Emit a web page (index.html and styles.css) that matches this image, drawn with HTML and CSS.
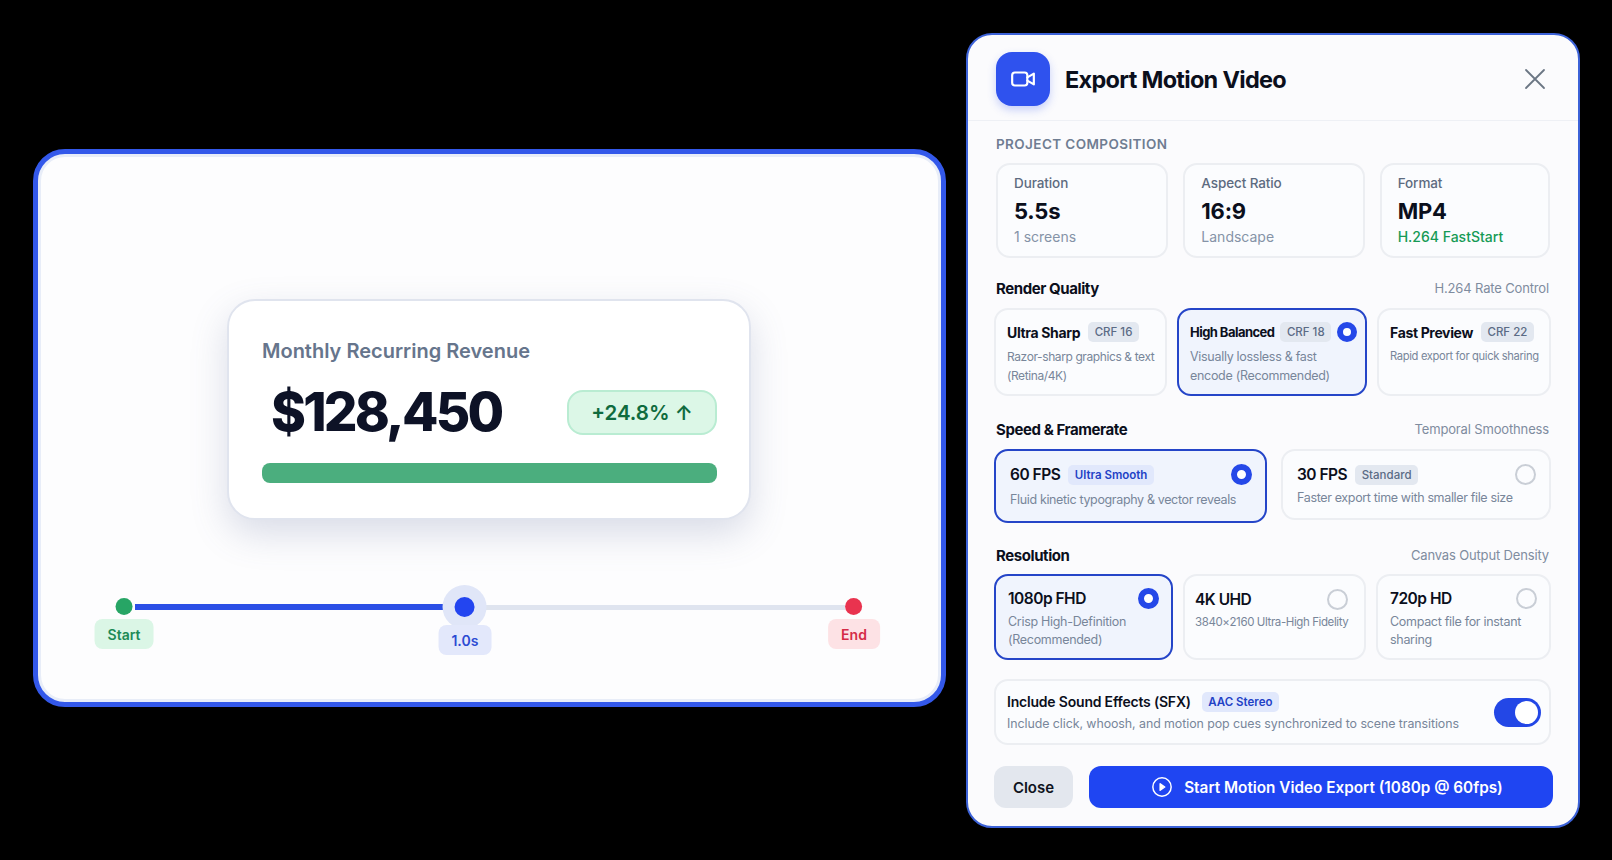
FILE: index.html
```html
<!DOCTYPE html>
<html lang="en">
<head>
    <meta charset="UTF-8">
    <title>Export Motion Video</title>
    <link rel="stylesheet" href="styles.css">
</head>
<body>
    <div class="stage">
        <section class="canvas">
            <div class="kpi-card">
                <div class="kpi-label">Monthly Recurring Revenue</div>
                <div class="kpi-row">
                    <span class="kpi-value">$128,450</span>
                    <span class="kpi-badge">+24.8% ↑</span>
                </div>
                <div class="kpi-bar"></div>
            </div>
            <div class="timeline">
                <div class="track"></div>
                <div class="track-fill"></div>
                <div class="stop" style="left: 0%">
                    <span class="stop-dot dot-green"></span>
                    <span class="stop-pill pill-green">Start</span>
                </div>
                <div class="stop stop-current" style="left: 46.7%">
                    <span class="stop-thumb"></span>
                    <span class="stop-pill pill-blue">1.0s</span>
                </div>
                <div class="stop" style="left: 100%">
                    <span class="stop-dot dot-red"></span>
                    <span class="stop-pill pill-red">End</span>
                </div>
            </div>
        </section>

        <section class="modal">
            <header class="modal-head">
                <div class="modal-icon">
                    <svg width="26" height="26" viewBox="0 0 24 24" fill="none" stroke="#fff" stroke-width="2" stroke-linecap="round" stroke-linejoin="round">
                        <rect x="2" y="6" width="14" height="12" rx="2.5"/>
                        <path d="M16 10.5l6-3.5v10l-6-3.5"/>
                    </svg>
                </div>
                <h1 class="modal-title">Export Motion Video</h1>
                <svg class="modal-close" width="24" height="24" viewBox="0 0 24 24" fill="none" stroke="#6b7684" stroke-width="1.8" stroke-linecap="round">
                    <path d="M3 3l18 18M21 3L3 21"/>
                </svg>
            </header>

            <div class="modal-body">
                <div class="eyebrow">PROJECT COMPOSITION</div>
                <div class="stats">
                    <div class="stat">
                        <div class="stat-label">Duration</div>
                        <div class="stat-value">5.5s</div>
                        <div class="stat-sub">1 screens</div>
                    </div>
                    <div class="stat">
                        <div class="stat-label">Aspect Ratio</div>
                        <div class="stat-value">16:9</div>
                        <div class="stat-sub">Landscape</div>
                    </div>
                    <div class="stat">
                        <div class="stat-label">Format</div>
                        <div class="stat-value">MP4</div>
                        <div class="stat-sub stat-good">H.264 FastStart</div>
                    </div>
                </div>

                <div class="section-head">
                    <span class="section-title">Render Quality</span>
                    <span class="section-note">H.264 Rate Control</span>
                </div>
                <div class="options quality">
                    <div class="option">
                        <div class="option-top">
                            <span class="option-title">Ultra Sharp</span>
                            <span class="tag">CRF 16</span>
                        </div>
                        <p class="option-desc">Razor-sharp graphics &amp; text (Retina/4K)</p>
                    </div>
                    <div class="option selected">
                        <div class="option-top">
                            <span class="option-title">High Balanced</span>
                            <span class="tag">CRF 18</span>
                            <span class="radio on"></span>
                        </div>
                        <p class="option-desc">Visually lossless &amp; fast<br>encode (Recommended)</p>
                    </div>
                    <div class="option">
                        <div class="option-top">
                            <span class="option-title">Fast Preview</span>
                            <span class="tag">CRF 22</span>
                        </div>
                        <p class="option-desc desc-small">Rapid export for quick sharing</p>
                    </div>
                </div>

                <div class="section-head head-gap">
                    <span class="section-title">Speed &amp; Framerate</span>
                    <span class="section-note">Temporal Smoothness</span>
                </div>
                <div class="options speed">
                    <div class="option selected">
                        <div class="option-top">
                            <span class="option-title">60 FPS</span>
                            <span class="tag tag-blue">Ultra Smooth</span>
                            <span class="radio on"></span>
                        </div>
                        <p class="option-desc">Fluid kinetic typography &amp; vector reveals</p>
                    </div>
                    <div class="option">
                        <div class="option-top">
                            <span class="option-title">30 FPS</span>
                            <span class="tag">Standard</span>
                            <span class="radio"></span>
                        </div>
                        <p class="option-desc">Faster export time with smaller file size</p>
                    </div>
                </div>

                <div class="section-head head-tight">
                    <span class="section-title">Resolution</span>
                    <span class="section-note">Canvas Output Density</span>
                </div>
                <div class="options resolution">
                    <div class="option selected">
                        <div class="option-top">
                            <span class="option-title">1080p FHD</span>
                            <span class="radio on"></span>
                        </div>
                        <p class="option-desc">Crisp High-Definition (Recommended)</p>
                    </div>
                    <div class="option option-narrow">
                        <div class="option-top">
                            <span class="option-title">4K UHD</span>
                            <span class="radio"></span>
                        </div>
                        <p class="option-desc desc-small">3840×2160 Ultra-High Fidelity</p>
                    </div>
                    <div class="option">
                        <div class="option-top">
                            <span class="option-title">720p HD</span>
                            <span class="radio"></span>
                        </div>
                        <p class="option-desc">Compact file for instant sharing</p>
                    </div>
                </div>

                <div class="sfx">
                    <div class="sfx-text">
                        <div class="option-top">
                            <span class="sfx-title">Include Sound Effects (SFX)</span>
                            <span class="tag tag-blue">AAC Stereo</span>
                        </div>
                        <p class="sfx-desc">Include click, whoosh, and motion pop cues synchronized to scene transitions</p>
                    </div>
                    <div class="toggle"><span class="toggle-knob"></span></div>
                </div>

                <div class="actions">
                    <button class="btn btn-close">Close</button>
                    <button class="btn btn-primary">
                        <svg width="22" height="22" viewBox="0 0 24 24" fill="none" stroke="#fff" stroke-width="1.6" stroke-linejoin="round">
                            <circle cx="12" cy="12" r="10"/>
                            <path d="M10 8.5l5 3.5-5 3.5z" fill="#fff"/>
                        </svg>
                        Start Motion Video Export (1080p @ 60fps)
                    </button>
                </div>
            </div>
        </section>
    </div>
</body>
</html>
```

FILE: styles.css
```css
* { margin: 0; padding: 0; box-sizing: border-box; }
body {
    font-family: Inter, "Noto Sans", sans-serif;
    background: #000;
    color: #0d1220;
}
.stage {
    width: 1612px;
    height: 860px;
    display: flex;
    align-items: flex-start;
    padding: 33px 0 0 33px;
    gap: 20px;
    overflow: hidden;
}

/* left canvas */
.canvas {
    width: 913px;
    height: 558px;
    margin-top: 116px;
    background: #fdfdfe;
    border: 5px solid #3358ea;
    border-radius: 32px;
    box-shadow: inset 0 0 0 3px #e8edf8;
    padding: 145px 0 0 86px;
}
.kpi-card {
    width: 524px;
    height: 221px;
    margin-left: 103px;
    background: #fff;
    border: 2px solid #e0e4ee;
    border-radius: 28px;
    box-shadow: 0 14px 36px rgba(90, 105, 150, 0.22);
    padding: 30px 32px 0 33px;
}
.kpi-label {
    font-size: 20px;
    line-height: 40px;
    font-weight: 600;
    color: #66758c;
}
.kpi-row {
    height: 62px;
    display: flex;
    align-items: center;
    justify-content: space-between;
    margin-top: 10px;
}
.kpi-value {
    font-size: 53px;
    font-weight: 800;
    color: #0d1226;
    margin-left: 9px;
    letter-spacing: -2.8px;
}
.kpi-badge {
    width: 150px;
    height: 45px;
    display: flex;
    align-items: center;
    justify-content: center;
    background: #dcf7e7;
    border: 2px solid #b9ecd2;
    border-radius: 16px;
    font-size: 20.5px;
    font-weight: 600;
    color: #0f6b3e;
}
.kpi-bar {
    height: 20px;
    margin-top: 20px;
    background: #4bae7e;
    border-radius: 8px;
}
.timeline {
    position: relative;
    width: 730px;
    height: 72px;
    margin-top: 64px;
}
.track {
    position: absolute;
    left: 341px;
    right: 9px;
    top: 21px;
    height: 5px;
    background: #dfe4ef;
}
.track-fill {
    position: absolute;
    left: 11px;
    width: 330px;
    top: 20px;
    height: 6px;
    background: #2b4fe6;
}
.stop {
    position: absolute;
    top: 14px;
    display: flex;
    flex-direction: column;
    align-items: center;
    transform: translateX(-50%);
}
.stop-current { top: 0; }
.stop-dot {
    width: 17px;
    height: 17px;
    border-radius: 50%;
}
.dot-green { background: #27a565; }
.dot-red { background: #e9334f; }
.stop-thumb {
    width: 20px;
    height: 20px;
    margin: 13px 0 8px;
    border-radius: 50%;
    background: #2345f0;
    box-shadow: 0 0 0 12px #e0e6f8;
}
.stop-pill {
    position: relative;
    height: 30px;
    padding: 0 13px;
    margin-top: 4px;
    display: flex;
    align-items: center;
    border-radius: 8px;
    font-size: 14px;
    font-weight: 600;
}
.stop-current .stop-pill { margin-top: 0; }
.pill-green { background: #dbf6e6; color: #1d8a56; }
.pill-blue { background: #e3e8fb; color: #2c4bd3; }
.pill-red { background: #fde2e5; color: #d52b46; }

/* export modal */
.modal {
    width: 614px;
    height: 795px;
    background: #fbfbfd;
    border: 2px solid #3c62d8;
    border-radius: 26px;
    overflow: hidden;
}
.modal-head {
    height: 86px;
    display: flex;
    align-items: center;
    padding: 3px 31px 0 28px;
    border-bottom: 1px solid #eef0f5;
}
.modal-icon {
    width: 54px;
    height: 54px;
    display: flex;
    align-items: center;
    justify-content: center;
    background: #2f52ee;
    border-radius: 16px;
    box-shadow: 0 4px 8px rgba(47, 82, 238, 0.25);
}
.modal-title {
    margin-left: 15px;
    font-size: 23.5px;
    font-weight: 700;
    letter-spacing: -0.7px;
    color: #0b0f1c;
}
.modal-close { margin-left: auto; }
.modal-body { padding: 13px 27px 0 26px; }
.eyebrow {
    margin-left: 2px;
    font-size: 13.5px;
    line-height: 20px;
    font-weight: 600;
    letter-spacing: 0.4px;
    color: #6f7d92;
}
.stats {
    display: grid;
    grid-template-columns: 172fr 181fr 170fr;
    gap: 15px;
    margin: 9px 1px 0 2px;
}
.stat {
    height: 95px;
    padding: 8px 16px 0;
    background: #fbfcfe;
    border: 2px solid #eceef2;
    border-radius: 14px;
}
.stat-label {
    font-size: 13.5px;
    line-height: 20px;
    font-weight: 500;
    letter-spacing: -0.1px;
    color: #5d6b80;
}
.stat-value {
    margin-top: 4px;
    font-size: 22px;
    line-height: 28px;
    font-weight: 700;
    letter-spacing: -0.2px;
    color: #0b0f1c;
}
.stat-sub {
    font-size: 14px;
    line-height: 24px;
    color: #8593a7;
}
.stat-good { color: #169a55; font-weight: 500; }
.section-head {
    display: flex;
    justify-content: space-between;
    align-items: center;
    height: 20px;
    margin: 20px 2px 10px;
}
.head-gap { margin-top: 23px; }
.head-tight { margin-top: 22px; }
.section-title {
    font-size: 15px;
    font-weight: 700;
    letter-spacing: -0.42px;
    color: #0b0f1c;
}
.section-note {
    font-size: 13px;
    letter-spacing: -0.15px;
    color: #7f8c9f;
}
.options { display: grid; gap: 10px; align-items: start; }
.quality { grid-template-columns: 173px 190px 174px; }
.speed { grid-template-columns: 273px 270px; gap: 14px; }
.resolution { grid-template-columns: 179px 183px 175px; margin-top: -1px; }
.option {
    padding: 12px 6px 0 11px;
    background: #fbfcfe;
    border: 2px solid #eceef2;
    border-radius: 14px;
}
.option.selected {
    background: #f0f4fd;
    border-color: #2545c8;
}
.quality .option { height: 88px; }
.speed .option { height: 71px; padding: 13px 13px 0 14px; }
.speed .option.selected { height: 74px; }
.resolution .option { height: 86px; padding: 12px 12px 0 12px; }
.resolution .option-narrow { padding: 13px 16px 0 10px; }
.option-top {
    display: flex;
    align-items: center;
    gap: 8px;
    min-height: 20px;
}
.option-title {
    font-size: 14px;
    font-weight: 700;
    letter-spacing: -0.35px;
    white-space: nowrap;
    color: #0b0f1c;
}
.quality .selected .option-title { font-size: 13px; letter-spacing: -0.55px; }
.quality .selected .option-top { gap: 6px; }
.quality .selected .radio { width: 20px; height: 20px; margin-right: 16px; }
.speed .option-title,
.resolution .option-title { font-size: 15.5px; font-weight: 600; letter-spacing: -0.5px; }
.option-desc {
    margin-top: 5px;
    font-size: 12px;
    line-height: 19px;
    letter-spacing: -0.4px;
    color: #78869a;
}
.quality .selected .option-desc { font-size: 12.5px; letter-spacing: -0.3px; }
.speed .option-desc { font-size: 12.5px; margin-top: 4px; line-height: 18px; letter-spacing: -0.35px; }
.speed .selected .option-desc { margin-top: 6px; }
.resolution .option-desc { font-size: 12.5px; margin-top: 4px; line-height: 17.5px; letter-spacing: -0.3px; }
.quality .option-desc.desc-small { font-size: 11.2px; letter-spacing: -0.35px; }
.resolution .option-desc.desc-small { font-size: 11.5px; letter-spacing: -0.4px; white-space: nowrap; }
.tag {
    height: 20px;
    padding: 0 6.5px;
    display: flex;
    align-items: center;
    background: #e3e8f0;
    border-radius: 5px;
    font-size: 11.5px;
    font-weight: 500;
    white-space: nowrap;
    color: #5b6b85;
}
.tag-blue {
    background: #e1e8fc;
    color: #1f42c6;
    font-size: 11.5px;
    font-weight: 600;
}
.radio {
    width: 21px;
    height: 21px;
    margin-left: auto;
    flex-shrink: 0;
    border: 2px solid #c9ced6;
    border-radius: 50%;
}
.radio.on {
    border: 6px solid #2548e8;
    background: #fff;
}
.sfx {
    height: 66px;
    margin-top: 19px;
    display: flex;
    align-items: center;
    justify-content: space-between;
    padding: 0 8px 0 11px;
    background: #fbfcfe;
    border: 2px solid #eceef2;
    border-radius: 14px;
}
.sfx-title {
    font-size: 14px;
    font-weight: 600;
    letter-spacing: -0.2px;
    color: #0b0f1c;
    margin-right: 3px;
}
.sfx-desc {
    margin-top: 3px;
    font-size: 12.4px;
    line-height: 18px;
    letter-spacing: -0.07px;
    color: #78869a;
}
.toggle {
    width: 47px;
    height: 29px;
    padding: 3px;
    display: flex;
    justify-content: flex-end;
    background: #2347e6;
    border-radius: 15px;
}
.toggle-knob {
    width: 23px;
    height: 23px;
    background: #fff;
    border-radius: 50%;
}
.actions {
    display: flex;
    gap: 16px;
    margin: 21px -2px 0 0;
}
.btn {
    height: 42px;
    border: none;
    border-radius: 12px;
    font-family: inherit;
    font-size: 15px;
    font-weight: 600;
}
.btn-close {
    width: 79px;
    background: #e3e7ee;
    color: #0f1420;
}
.btn-primary {
    flex: 1;
    display: flex;
    align-items: center;
    justify-content: center;
    gap: 11px;
    padding-left: 12px;
    background: #1f45f2;
    font-size: 15.3px;
    color: #fff;
}
```
